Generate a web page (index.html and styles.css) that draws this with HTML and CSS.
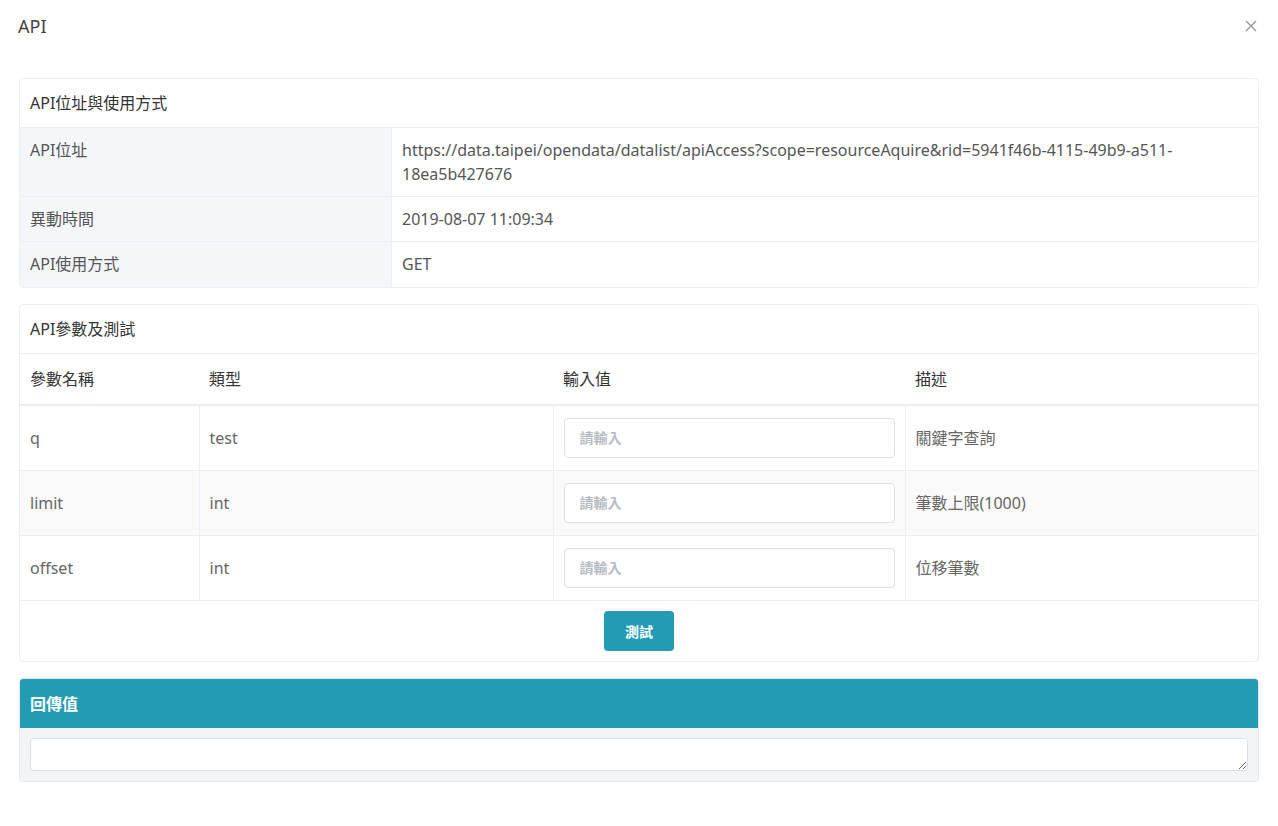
FILE: index.html
```html
<!DOCTYPE html>
<html lang="zh-Hant">
<head>
<meta charset="utf-8">
<title>API</title>
<link rel="stylesheet" href="styles.css">
</head>
<body>
<div class="dialog">
  <div class="dialog-header">
    <span class="dialog-title">API</span>
    <button class="close-btn" aria-label="close">
      <svg width="12" height="12" viewBox="0 0 12 12"><path d="M1 1L11 11M11 1L1 11" stroke="#909399" stroke-width="1.2" fill="none"/></svg>
    </button>
  </div>
  <div class="dialog-body">
    <section class="card">
      <div class="card-header">API位址與使用方式</div>
      <div class="desc">
        <div class="desc-row">
          <div class="desc-label">API位址</div>
          <div class="desc-value">https://data.taipei/opendata/datalist/apiAccess?scope=resourceAquire&amp;rid=5941f46b-4115-49b9-a511-18ea5b427676</div>
        </div>
        <div class="desc-row">
          <div class="desc-label">異動時間</div>
          <div class="desc-value">2019-08-07 11:09:34</div>
        </div>
        <div class="desc-row">
          <div class="desc-label">API使用方式</div>
          <div class="desc-value">GET</div>
        </div>
      </div>
    </section>

    <section class="card">
      <div class="card-header">API參數及測試</div>
      <table class="params">
        <colgroup>
          <col class="c1"><col class="c2"><col class="c3"><col class="c4">
        </colgroup>
        <thead>
          <tr><th>參數名稱</th><th>類型</th><th>輸入值</th><th>描述</th></tr>
        </thead>
        <tbody>
          <tr>
            <td>q</td><td>test</td>
            <td><input class="inp" type="text" placeholder="請輸入"></td>
            <td>關鍵字查詢</td>
          </tr>
          <tr class="striped">
            <td>limit</td><td>int</td>
            <td><input class="inp" type="text" placeholder="請輸入"></td>
            <td>筆數上限(1000)</td>
          </tr>
          <tr>
            <td>offset</td><td>int</td>
            <td><input class="inp" type="text" placeholder="請輸入"></td>
            <td>位移筆數</td>
          </tr>
          <tr class="btn-row">
            <td colspan="4"><button class="test-btn">測試</button></td>
          </tr>
        </tbody>
      </table>
    </section>

    <section class="card result">
      <div class="result-header">回傳值</div>
      <div class="result-body">
        <textarea class="result-text"></textarea>
      </div>
    </section>
  </div>
</div>
</body>
</html>
```

FILE: styles.css
```css
* { box-sizing: border-box; }
html, body { margin: 0; padding: 0; background: #fff; }
body {
  font-family: "Noto Sans", "Noto Sans CJK TC", sans-serif;
  color: #333;
  font-size: 16px;
}
.dialog { width: 1278px; }
.dialog-header {
  display: flex;
  align-items: center;
  justify-content: space-between;
  height: 52px;
  padding: 0 17px 0 18px;
}
.dialog-title {
  font-size: 18px;
  color: #444;
  line-height: 24px;
}
.close-btn {
  border: 0;
  background: none;
  padding: 0;
  width: 20px;
  height: 20px;
  display: flex;
  align-items: center;
  justify-content: center;
}
.dialog-body { padding: 26px 19px 0 19px; }
.card {
  border: 1px solid #ebeef5;
  border-radius: 4px;
  margin-bottom: 16px;
  overflow: hidden;
  background: #fff;
}
.card-header {
  height: 49px;
  padding: 0 10px;
  display: flex;
  align-items: center;
  font-size: 16px;
  line-height: 24px;
  color: #333;
  border-bottom: 1px solid #ebeef5;
}
.desc-row {
  display: grid;
  grid-template-columns: 372px 1fr;
  border-bottom: 1px solid #ebeef5;
}
.desc-row:last-child { border-bottom: 0; }
.desc-label {
  background: #f5f6fa;
  padding: 10px;
  color: #555;
  line-height: 24px;
  border-right: 1px solid #ebeef5;
}
.desc-value {
  padding: 10px;
  color: #555;
  line-height: 24px;
}
.desc-row:last-child .desc-label,
.desc-row:last-child .desc-value { padding-bottom: 11px; }
.params {
  width: 100%;
  border-collapse: collapse;
  table-layout: fixed;
}
.c1 { width: 179px; }
.c2 { width: 354px; }
.c3 { width: 352px; }
.params th {
  text-align: left;
  font-weight: normal;
  color: #333;
  height: 51px;
  padding: 0 10px;
  line-height: 24px;
  border-bottom: 2px solid #ebeef5;
}
.params td {
  height: 65px;
  padding: 0 10px;
  color: #666;
  line-height: 24px;
  border-bottom: 1px solid #ebeef5;
  border-left: 1px solid #ebeef5;
}
.params td:first-child { border-left: 0; }
.params tr.striped td { background: #fafafa; }
.inp {
  display: block;
  width: 100%;
  height: 40px;
  border: 1px solid #dcdfe6;
  border-radius: 4px;
  padding: 0 15px;
  font-family: inherit;
  font-size: 14px;
  color: #606266;
  background: #fff;
  outline: none;
}
.inp::placeholder { color: #b8bcc4; font-weight: bold; }
.params tr.btn-row td {
  height: 61px;
  border-bottom: 0;
  text-align: center;
  padding: 0;
}
.test-btn {
  width: 70px;
  height: 40px;
  background: #239bb2;
  color: #fff;
  border: 0;
  border-radius: 4px;
  font-family: inherit;
  font-size: 14px;
  font-weight: bold;
  vertical-align: middle;
}
.result { border-color: #e4e9ee; }
.result-header {
  height: 49px;
  background: #239bb2;
  color: #fff;
  font-weight: bold;
  font-size: 16px;
  line-height: 24px;
  display: flex;
  align-items: center;
  padding: 0 10px;
}
.result-body {
  background: #f1f5f8;
  padding: 10px;
}
.result-text {
  display: block;
  width: 100%;
  height: 33px;
  border: 1px solid #dcdfe6;
  border-radius: 4px;
  background: #fff;
  resize: vertical;
  font-family: inherit;
}
```
